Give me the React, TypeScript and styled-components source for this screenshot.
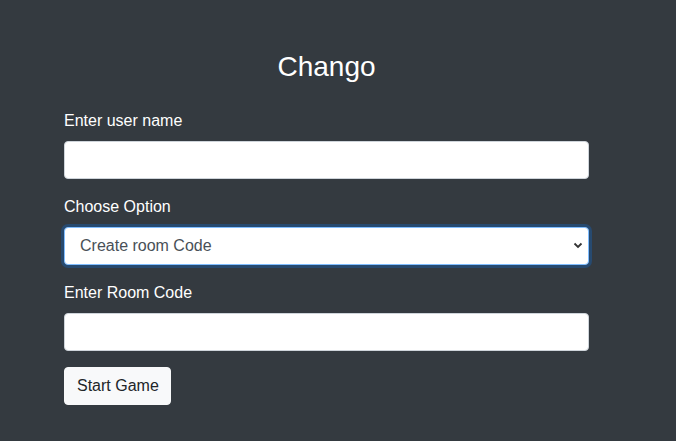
import React, { useState } from 'react';
import styled, { createGlobalStyle } from 'styled-components';

const GlobalStyle = createGlobalStyle`
  html, body {
    margin: 0;
    padding: 0;
    background-color: #343a40;
    font-family: 'Liberation Sans', Arial, sans-serif;
  }
  * {
    box-sizing: border-box;
  }
`;

const Page = styled.div`
  min-height: 441px;
  background-color: #343a40;
  padding: 50px 0 0 64px;
`;

const Form = styled.form`
  width: 525px;
  display: flex;
  flex-direction: column;
`;

const Title = styled.h3`
  margin: 0 0 25px;
  font-size: 28px;
  font-weight: 500;
  line-height: 1.2;
  color: #fff;
  text-align: center;
`;

const Group = styled.div`
  display: flex;
  flex-direction: column;
  margin-bottom: 16px;
`;

const Label = styled.label`
  color: #fff;
  font-size: 16px;
  line-height: 24px;
  margin-bottom: 8px;
`;

const Input = styled.input`
  height: 38px;
  width: 100%;
  padding: 6px 12px;
  font-size: 16px;
  font-family: inherit;
  color: #495057;
  background: #fff;
  border: 1px solid #ced4da;
  border-radius: 4px;
  outline: none;
`;

const SelectWrap = styled.div`
  position: relative;
  svg {
    position: absolute;
    right: 6px;
    top: 15px;
    pointer-events: none;
  }
`;

const Select = styled.select<{ focused?: boolean }>`
  height: 38px;
  width: 100%;
  padding: 6px 28px 6px 15px;
  font-size: 16px;
  font-family: inherit;
  color: #495057;
  background: #fff;
  border: 1px solid ${(p) => (p.focused ? '#80bdff' : '#ced4da')};
  border-radius: 4px;
  box-shadow: ${(p) => (p.focused ? '0 0 0 3px rgba(0, 123, 255, 0.25)' : 'none')};
  outline: none;
  appearance: none;
`;

const Button = styled.button`
  align-self: flex-start;
  height: 38px;
  padding: 6px 11px 6px 12px;
  font-size: 16px;
  font-family: inherit;
  line-height: 24px;
  color: #212529;
  background: #f8f9fa;
  border: 1px solid #f8f9fa;
  border-radius: 4px;
  cursor: pointer;
`;

const App: React.FunctionComponent = () => {
  const [option, setOption] = useState('create');

  return (
    <Page>
      <GlobalStyle />
      <Form onSubmit={(e) => e.preventDefault()}>
        <Title>Chango</Title>
        <Group>
          <Label htmlFor='username'>Enter user name</Label>
          <Input id='username' type='text' />
        </Group>
        <Group>
          <Label htmlFor='option'>Choose Option</Label>
          <SelectWrap>
            <Select id='option' focused value={option} onChange={(e) => setOption(e.target.value)}>
              <option value='create'>Create room Code</option>
              <option value='join'>Join room</option>
            </Select>
            <svg width='10' height='7' viewBox='0 0 10 7'>
              <path d='M1.5 1.5 L5 5 L8.5 1.5' fill='none' stroke='#333' strokeWidth='1.8' />
            </svg>
          </SelectWrap>
        </Group>
        <Group>
          <Label htmlFor='roomcode'>Enter Room Code</Label>
          <Input id='roomcode' type='text' />
        </Group>
        <Button type='submit'>Start Game</Button>
      </Form>
    </Page>
  );
};

export default App;
